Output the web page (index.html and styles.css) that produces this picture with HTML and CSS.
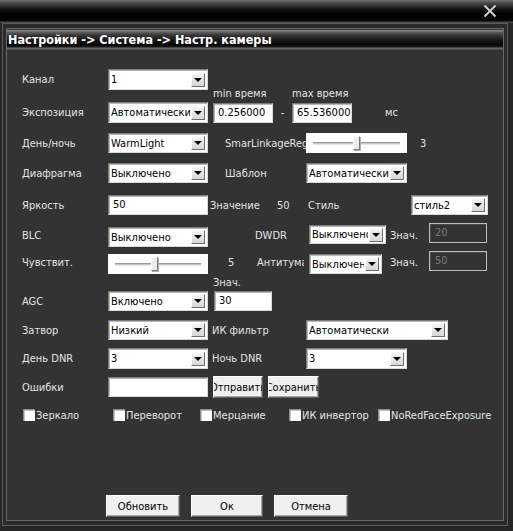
FILE: index.html
```html
<!DOCTYPE html>
<html lang="ru">
<head>
<meta charset="utf-8">
<title>Настр. камеры</title>
<link rel="stylesheet" href="styles.css">
</head>
<body>
<div class="topbar">
  <svg class="close" width="14" height="14" viewBox="0 0 14 14"><path d="M1.5 1.5L12.5 12.5M12.5 1.5L1.5 12.5" stroke="#d0d0d0" stroke-width="2" fill="none"/></svg>
</div>
<div class="frame">
  <div class="panel">
    <div class="title">Настройки -&gt; Система -&gt; Настр. камеры</div>
    <div class="form">
      <div class="row r1">
        <span class="lbl">Канал</span>
        <div class="sel w100 h21"><span class="val">1</span><span class="arr"></span></div>
      </div>
      <div class="row rl1">
        <span class="sp191"></span>
        <span class="cap78">min время</span>
        <span>max время</span>
      </div>
      <div class="row r2">
        <span class="lbl">Экспозиция</span>
        <div class="sel w100 h21"><span class="val">Автоматически</span><span class="arr"></span></div>
        <div class="inp w60 ml5">0.256000</div>
        <span class="dash">-</span>
        <div class="inp w60">65.536000</div>
        <span class="ms">мс</span>
      </div>
      <div class="row r3">
        <span class="lbl">День/ночь</span>
        <div class="sel w100"><span class="val">WarmLight</span><span class="arr"></span></div>
        <span class="clip lbl-smar">SmarLinkageRegulation</span>
        <div class="slider w101"><div class="groove"><span class="thumb" style="left:40px"></span></div></div>
        <span class="num3">3</span>
      </div>
      <div class="row r4">
        <span class="lbl">Диафрагма</span>
        <div class="sel w100"><span class="val">Выключено</span><span class="arr"></span></div>
        <span class="lbl-smar">Шаблон</span>
        <div class="sel w101"><span class="val">Автоматически</span><span class="arr"></span></div>
      </div>
      <div class="row r5">
        <span class="lbl">Яркость</span>
        <div class="inp w100">50</div>
        <span class="znach">Значение</span>
        <span class="v50">50</span>
        <span class="stil">Стиль</span>
        <div class="sel w77"><span class="val">стиль2</span><span class="arr"></span></div>
      </div>
      <div class="row r6">
        <span class="lbl">BLC</span>
        <div class="sel w100 end"><span class="val">Выключено</span><span class="arr"></span></div>
        <span class="dwdr">DWDR</span>
        <div class="sel w77 h19 top2"><span class="val">Выключено</span><span class="arr"></span></div>
        <span class="zn">Знач.</span>
        <div class="inp dis w58 h22 start">20</div>
      </div>
      <div class="row r7">
        <span class="lbl">Чувствит.</span>
        <div class="slider w100 end"><div class="groove"><span class="thumb" style="left:36px"></span></div></div>
        <span class="v5">5</span>
        <span class="clip anti">Антитуман</span>
        <div class="sel w73 end"><span class="val">Выключено</span><span class="arr"></span></div>
        <span class="zn zn2">Знач.</span>
        <div class="inp dis w58 h21 start">50</div>
      </div>
      <div class="row rl2">
        <span class="sp191"></span>
        <span>Знач.</span>
      </div>
      <div class="row r8">
        <span class="lbl">AGC</span>
        <div class="sel w100"><span class="val">Включено</span><span class="arr"></span></div>
        <div class="inp w58 ml6">30</div>
      </div>
      <div class="row r9">
        <span class="lbl">Затвор</span>
        <div class="sel w100"><span class="val">Низкий</span><span class="arr"></span></div>
        <span class="sub">ИК фильтр</span>
        <div class="sel w142"><span class="val">Автоматически</span><span class="arr"></span></div>
      </div>
      <div class="row r10">
        <span class="lbl">День DNR</span>
        <div class="sel w100 h21"><span class="val">3</span><span class="arr"></span></div>
        <span class="sub">Ночь DNR</span>
        <div class="sel w101 h21"><span class="val">3</span><span class="arr"></span></div>
      </div>
      <div class="row r11">
        <span class="lbl">Ошибки</span>
        <div class="inp w100 h21"></div>
        <div class="btn w50 ml5">Отправить</div>
        <div class="btn w51 ml5">Сохранить</div>
      </div>
      <div class="row r12">
        <label class="chk c1"><span class="box"></span>Зеркало</label>
        <label class="chk c2"><span class="box"></span>Переворот</label>
        <label class="chk c3"><span class="box"></span>Мерцание</label>
        <label class="chk c4"><span class="box"></span>ИК инвертор</label>
        <label class="chk"><span class="box"></span>NoRedFaceExposure</label>
      </div>
    </div>
    <div class="actions">
      <div class="btn big">Обновить</div>
      <div class="btn big ok">Ок</div>
      <div class="btn big">Отмена</div>
    </div>
  </div>
</div>
</body>
</html>
```

FILE: styles.css
```css
html, body {
  margin: 0;
  padding: 0;
}
body {
  width: 513px;
  height: 531px;
  overflow: hidden;
  background: #262626;
  font-family: "DejaVu Sans Condensed", "DejaVu Sans", sans-serif;
  font-size: 11px;
  color: #e4e4e4;
}
.topbar {
  height: 23px;
  background: linear-gradient(to bottom, #727272 0px, #4a4a4a 3px, #151515 9px, #000 14px, #050505 21px, #4a4a4a 22px, #4a4a4a 23px);
  display: flex;
  justify-content: flex-end;
  align-items: flex-start;
}
.close {
  margin: 4px 16px 0 0;
}
.frame {
  box-sizing: border-box;
  margin-left: 2px;
  width: 506px;
  height: 503px;
  border: 1px solid #5c5c5c;
  padding: 4px 3px;
  background: #2a2a2a;
}
.panel {
  box-sizing: border-box;
  height: 100%;
  border: 1px solid #686868;
  background: #333333;
  display: flex;
  flex-direction: column;
}
.title {
  margin-top: 1px;
  height: 20px;
  line-height: 20px;
  padding-left: 1px;
  font-family: "DejaVu Sans Condensed", "DejaVu Sans", sans-serif;
  font-weight: bold;
  font-size: 12.5px;
  color: #fff;
  background: linear-gradient(to bottom, #909090 0px, #626262 2px, #383838 5px, #181818 10px, #060606 15px, #1c1c1c 17px, #6a6a6a 18px, #4c4c4c 20px);
  white-space: nowrap;
}
.form {
  padding: 19px 0 0 15px;
  display: flex;
  flex-direction: column;
}
.row {
  display: flex;
  align-items: center;
  white-space: nowrap;
}
.lbl {
  width: 86px;
  flex: none;
}
.r1 { height: 21px; }
.rl1 { height: 12px; margin-top: -2px; line-height: 12px; }
.r2 { height: 21px; margin-top: 2px; }
.r3 { height: 20px; margin-top: 10px; }
.r4 { height: 20px; margin-top: 10px; }
.r5 { height: 20px; margin-top: 12px; }
.r6 { height: 24px; margin-top: 8px; }
.r7 { height: 23px; margin-top: 4px; }
.rl2 { height: 17px; line-height: 17px; }
.r8 { height: 20px; }
.r9 { height: 20px; margin-top: 9px; }
.r10 { height: 21px; margin-top: 8px; }
.r11 { height: 22px; margin-top: 7px; }
.r12 { height: 12px; margin-top: 11px; }

.sp191 { width: 191px; flex: none; }
.cap78 { width: 79px; flex: none; }

.w50 { width: 50px; }
.w51 { width: 51px; }
.w58 { width: 58px; }
.w60 { width: 60px; }
.w73 { width: 73px; }
.w77 { width: 77px; }
.w100 { width: 100px; }
.w101 { width: 101px; }
.w142 { width: 142px; }
.ml5 { margin-left: 5px; }
.ml6 { margin-left: 6px; }

.sel {
  box-sizing: border-box;
  flex: none;
  height: 20px;
  display: flex;
  align-items: center;
  background: #fff;
  border: 1px solid;
  border-color: #7a7a7a #d8d8d8 #d8d8d8 #7a7a7a;
  box-shadow: inset 1px 1px 0 #b8b8b8;
  padding-left: 2px;
  color: #000;
  overflow: hidden;
}
.h19 { height: 19px; }
.h21 { height: 21px; }
.h22 { height: 22px; }
.end { align-self: flex-end; }
.start { align-self: flex-start; }
.top2 { align-self: flex-start; margin-top: 2px; }
.val {
  flex: 1;
  min-width: 0;
  overflow: hidden;
  white-space: nowrap;
}
.arr {
  box-sizing: border-box;
  flex: none;
  width: 14px;
  height: 14px;
  margin: 0 2px 0 1px;
  background: linear-gradient(#f4f4f4, #d6d6d6);
  border: 1px solid;
  border-color: #ffffff #6e6e6e #6e6e6e #ffffff;
  display: flex;
  align-items: center;
  justify-content: center;
}
.arr::after {
  content: "";
  width: 0;
  height: 0;
  border-left: 4px solid transparent;
  border-right: 4px solid transparent;
  border-top: 4px solid #000;
}
.inp {
  box-sizing: border-box;
  flex: none;
  height: 20px;
  line-height: 18px;
  padding-left: 4px;
  background: #fff;
  color: #000;
  border: 1px solid;
  border-color: #7a7a7a #d8d8d8 #d8d8d8 #7a7a7a;
  box-shadow: inset 1px 1px 0 #b8b8b8;
  overflow: hidden;
}
.inp.dis {
  background: transparent;
  color: #7a7a7a;
  border: 1px solid #bdbdbd;
  box-shadow: inset 1px 1px 0 #4a4a4a;
  padding-left: 5px;
}
.dash {
  width: 19px;
  flex: none;
  text-align: center;
}
.ms {
  margin-left: 33px;
}
.clip {
  overflow: hidden;
  white-space: nowrap;
}
.lbl-smar {
  margin-left: 17px;
  width: 81px;
  flex: none;
  overflow: hidden;
}
.slider {
  box-sizing: border-box;
  flex: none;
  height: 20px;
  background: #fff;
  display: flex;
  align-items: center;
  padding: 0 7px 0 7px;
}
.groove {
  position: relative;
  flex: 1;
  height: 3px;
  box-sizing: border-box;
  border-top: 1px solid #9a9a9a;
  border-bottom: 1px solid #e6e6e6;
  background: #c8c8c8;
}
.thumb {
  position: absolute;
  top: -7px;
  width: 7px;
  height: 14px;
  box-sizing: border-box;
  background: #ececec;
  border: 1px solid;
  border-color: #fff #7a7a7a #7a7a7a #fff;
  box-shadow: 1px 1px 0 #b0b0b0;
}
.num3 { margin-left: 13px; }
.znach { margin-left: 2px; width: 67px; flex: none; }
.v50 { width: 31px; flex: none; }
.stil { width: 103px; flex: none; }
.dwdr { margin-left: 47px; width: 54px; flex: none; }
.zn { margin-left: 4px; width: 39px; flex: none; }
.zn2 { margin-left: 8px; }
.v5 { margin-left: 20px; width: 29px; flex: none; }
.anti { width: 47px; margin-right: 5px; flex: none; }
.sub { margin-left: 4px; width: 94px; flex: none; }
.btn {
  box-sizing: border-box;
  flex: none;
  height: 22px;
  display: flex;
  align-items: center;
  justify-content: center;
  overflow: hidden;
  white-space: nowrap;
  background: #f0f0f0;
  color: #000;
  border: 1px solid;
  border-color: #ffffff #5e5e5e #5e5e5e #ffffff;
  box-shadow: inset -1px -1px 0 #a6a6a6;
}
.chk {
  display: flex;
  align-items: center;
  flex: none;
}
.c1 { margin-left: 1px; width: 90px; }
.c2 { width: 87px; }
.c3 { width: 89px; }
.c4 { width: 89px; }
.box {
  box-sizing: border-box;
  width: 12px;
  height: 12px;
  margin-right: 1px;
  background: #fff;
  border-left: 1px solid #8a8a8a;
  border-top: 1px solid #8a8a8a;
  box-shadow: inset 1px 1px 0 #c4c4c4;
}
.actions {
  margin-top: auto;
  margin-bottom: 3px;
  padding-left: 99px;
  display: flex;
  gap: 11px;
}
.big {
  width: 74px;
}
.big.ok {
  width: 72px;
}
```
